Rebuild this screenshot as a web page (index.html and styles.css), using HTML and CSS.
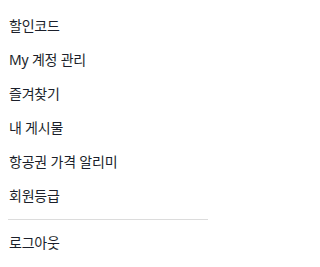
FILE: index.html
```html
<!DOCTYPE html>
<html lang="ko">
<head>
<meta charset="utf-8">
<link rel="stylesheet" href="styles.css">
</head>
<body>
<nav class="menu">
  <ul class="menu-list">
    <li class="menu-item">할인코드</li>
    <li class="menu-item">My 계정 관리</li>
    <li class="menu-item">즐겨찾기</li>
    <li class="menu-item">내 게시물</li>
    <li class="menu-item">항공권 가격 알리미</li>
    <li class="menu-item">회원등급</li>
  </ul>
  <hr class="divider">
  <ul class="menu-list">
    <li class="menu-item">로그아웃</li>
  </ul>
</nav>
</body>
</html>
```
FILE: styles.css
```css
html, body {
  margin: 0;
  padding: 0;
  background: #fff;
}
body {
  padding: 9px 8px 0 8px;
  font-family: "Noto Sans", "Noto Sans CJK KR", sans-serif;
  color: #1b1f2b;
}
.menu {
  width: 200px;
}
.menu-list {
  list-style: none;
  margin: 0;
  padding: 0;
}
.menu-item {
  height: 34px;
  line-height: 34px;
  font-size: 14px;
  padding-left: 1px;
  letter-spacing: -0.2px;
}
.divider {
  border: 0;
  border-top: 1px solid #dcdcdc;
  margin: 6px 0 6px 0;
  height: 0;
}
```
